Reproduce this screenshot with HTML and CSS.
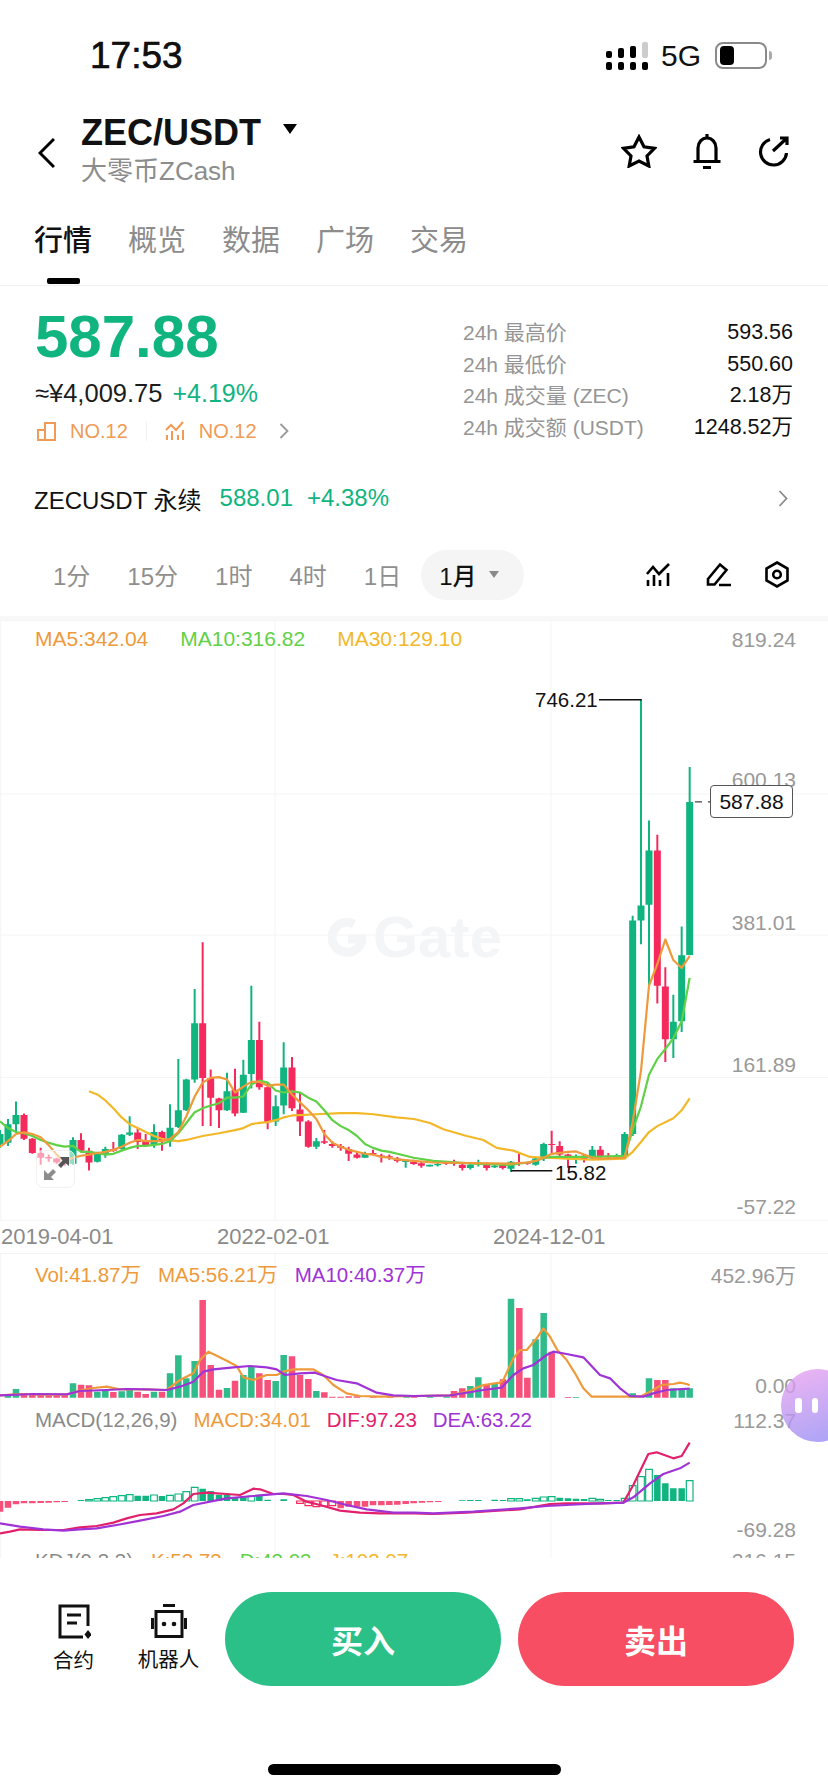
FILE: index.html
```html
<!DOCTYPE html>
<html lang="zh-CN">
<head>
    <meta charset="UTF-8">
    <meta name="viewport" content="width=device-width, initial-scale=1.0">
    <title>ZEC/USDT</title>
    <link rel="stylesheet" href="styles.css">
</head>
<body>
<div class="page">

    <div class="status">
        <span class="time">17:53</span>
        <svg class="signal" width="42" height="28" viewBox="0 0 42 28">
            <rect x="36" y="0" width="6" height="16" rx="2" fill="#ccc"/>
            <rect x="24" y="4" width="6" height="12" rx="2"/>
            <rect x="12" y="6" width="6" height="10" rx="2"/>
            <rect x="0" y="9" width="6" height="7" rx="2"/>
            <rect x="0" y="20" width="6" height="8" rx="2"/>
            <rect x="12" y="20" width="6" height="8" rx="2"/>
            <rect x="24" y="20" width="6" height="8" rx="2"/>
            <rect x="36" y="20" width="6" height="8" rx="2"/>
        </svg>
        <span class="network">5G</span>
        <div class="battery"><div class="battery-fill"></div></div>
        <div class="battery-nub"></div>
    </div>

    <div class="topbar">
        <svg class="back" width="17" height="30" viewBox="0 0 17 30"><polyline points="16,1 2,15 16,29"/></svg>
        <div class="pair">
            <div class="pair-name">ZEC/USDT <span class="caret"></span></div>
            <div class="pair-sub">大零币ZCash</div>
        </div>
        <div class="actions">
            <svg width="36" height="34" viewBox="0 0 36 34"><polygon points="18,3 23,12.8 33.5,14.3 26,22 27.8,32 18,27 8.2,32 10,22 2.5,14.3 13,12.8"/></svg>
            <svg width="30" height="36" viewBox="0 0 30 36"><path d="M6 28V15a9 10 0 0 1 18 0V28M1.500 28.500H28.500M15 1V4M11 34.500H19"/></svg>
            <svg width="32" height="31" viewBox="0 0 32 31"><path d="M13 3.500A13 13 0 1 0 29.500 17M16 15L30 2M23 2H30V9"/></svg>
        </div>
    </div>

    <div class="tabs">
        <div class="tab active">行情</div>
        <div class="tab">概览</div>
        <div class="tab">数据</div>
        <div class="tab">广场</div>
        <div class="tab">交易</div>
    </div>

    <div class="summary">
        <div class="quote">
            <div class="price">587.88</div>
            <div class="fiat">≈¥4,009.75<span class="change">+4.19%</span></div>
            <div class="rank">
                <svg width="19" height="20" viewBox="0 0 19 20"><path d="M1 9H8V19H1ZM8 2H18V19H8Z"/></svg>
                <span class="rank-text">NO.12</span>
                <span class="rank-sep"></span>
                <svg width="20" height="20" viewBox="0 0 20 20"><path d="M1 9L6 4L11 9L18 1M2 14V19M7 10V19M13 14V19M18 9V19"/></svg>
                <span class="rank-text">NO.12</span>
                <svg class="rank-more" width="10" height="16" viewBox="0 0 10 16"><polyline points="1.500,1 8.500,8 1.500,15"/></svg>
            </div>
        </div>
        <div class="stats">
            <div class="stat"><span>24h 最高价</span><b>593.56</b></div>
            <div class="stat"><span>24h 最低价</span><b>550.60</b></div>
            <div class="stat"><span>24h 成交量 (ZEC)</span><b>2.18万</b></div>
            <div class="stat"><span>24h 成交额 (USDT)</span><b>1248.52万</b></div>
        </div>
    </div>

    <div class="perp">
        <span class="perp-name">ZECUSDT 永续</span>
        <span class="perp-price">588.01</span>
        <span class="perp-change">+4.38%</span>
        <svg class="perp-more" width="10" height="17" viewBox="0 0 10 17"><polyline points="1.500,1 8.500,8.500 1.500,16"/></svg>
    </div>

    <div class="periods">
        <span class="period">1分</span>
        <span class="period">15分</span>
        <span class="period">1时</span>
        <span class="period">4时</span>
        <span class="period">1日</span>
        <span class="period active">1月<i class="period-caret"></i></span>
        <div class="tools">
            <svg width="25" height="24" viewBox="0 0 25 24"><path d="M1 11L7 4L13 11L23 1M2 17V23M8 12V23M14 17V23M22 10V23"/></svg>
            <svg width="26" height="25" viewBox="0 0 26 25"><path d="M3 17L15 2.500L21.500 8L9.500 22.500H3ZM14 23H26"/></svg>
            <svg width="24" height="27" viewBox="0 0 24 27"><path d="M12 1.500L22.500 7.500V19.500L12 25.500L1.500 19.500V7.500Z"/><circle cx="12" cy="13.500" r="3.800"/></svg>
        </div>
    </div>

    <div class="kline">
        <div class="watermark">
            <svg width="38" height="40" viewBox="0 0 38 40"><path d="M26 7A15 15 0 1 0 34 22H20"/></svg>
            <span>Gate</span>
        </div>
        <svg class="kline-chart" width="828" height="620" viewBox="0 0 2484 1568" preserveAspectRatio="none">
            <path class="grid" d="M0 1H2484M0 440H2484M0 797H2484M0 1157H2484M0 1518H2484M2 0V1518M825 0V1518M1653 0V1518"/>
            <!-- up candles -->
            <path class="wick up" d="M0 1290V1335M24 1262V1330M48 1218V1295M219 1308V1378M292 1345V1372M316 1332V1360M365 1300V1340M389 1255V1305M462 1275V1335M510 1225V1332M535 1110V1285M559 1160V1242M584 933V1170M681 1145V1242M730 1112V1247M754 925V1185M827 1202V1280M851 1068V1250M949 1310V1338M1095 1345V1360M1217 1365V1385M1289 1378V1382M1313 1372V1382M1411 1375V1390M1435 1365V1382M1484 1378V1386M1533 1368V1396M1607 1358V1380M1631 1322V1368M1728 1352V1375M1777 1330V1365M1850 1350V1365M1874 1295V1358M1898 748V1305M1923 200V820M1947 507V925M2020 948V1108M2045 775V1042M2069 372V848"/>
            <path class="body up" d="M0 1300V1325M24 1275V1322M48 1252V1275M219 1315V1375M292 1350V1370M316 1338V1352M365 1302V1338M389 1296V1302M462 1295V1328M510 1284V1318M535 1240V1282M559 1162V1240M584 1020V1162M681 1192V1240M730 1150V1246M754 1062V1148M827 1230V1268M851 1132V1228M949 1318V1332M1095 1350V1360M1217 1368V1371M1289 1378V1382M1313 1376V1379M1411 1378V1386M1435 1372V1376M1484 1380V1384M1533 1370V1388M1607 1362V1378M1631 1325V1362M1728 1356V1359M1777 1340V1362M1850 1355V1358M1874 1300V1355M1898 760V1300M1923 722V760M1947 583V720M2020 1016V1060M2045 848V1015M2069 460V847"/>
            <!-- down candles -->
            <path class="wick down" d="M72 1248V1315M97 1310V1350M122 1335V1378M146 1352V1370M170 1360V1375M194 1365V1380M243 1298V1345M267 1335V1392M340 1320V1345M413 1285V1338M437 1300V1332M486 1292V1342M608 815V1280M632 1137V1280M657 1208V1285M705 1135V1255M778 1016V1188M803 1170V1288M876 1105V1242M900 1195V1305M925 1265V1335M973 1290V1325M997 1318V1335M1022 1325V1342M1046 1332V1368M1071 1345V1362M1119 1340V1352M1144 1350V1372M1168 1352V1365M1192 1358V1372M1241 1365V1378M1264 1368V1385M1338 1368V1378M1362 1365V1380M1387 1375V1392M1460 1372V1392M1508 1375V1390M1557 1348V1380M1582 1370V1378M1655 1292V1352M1679 1318V1358M1704 1350V1385M1752 1352V1372M1801 1330V1362M1825 1348V1362M1972 543V970M1996 878V1118"/>
            <path class="body down" d="M72 1252V1312M97 1312V1348M122 1348V1360M146 1358V1362M170 1362V1372M194 1372V1376M243 1315V1342M267 1342V1372M340 1338V1342M413 1296V1320M437 1315V1328M486 1295V1318M608 1020V1158M632 1158V1208M657 1210V1240M705 1188V1248M778 1062V1182M803 1182V1270M876 1132V1235M900 1238V1268M925 1268V1332M973 1318V1322M997 1325V1330M1022 1330V1335M1046 1338V1350M1071 1352V1360M1119 1348V1351M1144 1354V1358M1168 1356V1359M1192 1362V1368M1241 1370V1376M1264 1374V1380M1338 1372V1375M1362 1372V1376M1387 1378V1386M1460 1375V1386M1508 1378V1386M1557 1372V1375M1582 1372V1375M1655 1325V1328M1679 1330V1352M1704 1352V1362M1752 1355V1365M1801 1340V1358M1825 1355V1358M1972 583V925M1996 927V1060"/>
            <path class="ma ma30" d="M267 1192L292 1200L316 1215L340 1235L365 1258L389 1275L413 1285L437 1295L462 1305L486 1312L510 1316L535 1318L559 1315L608 1305L657 1298L705 1290L730 1285L754 1275L778 1272L803 1270L827 1265L851 1258L876 1253L900 1252L949 1250L1022 1247L1071 1247L1120 1250L1190 1258L1242 1262L1290 1272L1330 1288L1400 1305L1450 1315L1490 1335L1540 1342L1590 1358L1640 1360L1700 1362L1777 1365L1874 1362L1898 1345L1923 1320L1947 1295L1972 1280L2020 1260L2045 1240L2069 1210"/>
            <path class="ma ma10" d="M0 1268L24 1285L48 1295L72 1298L97 1305L122 1315L146 1322L170 1328L194 1332L219 1330L243 1345L267 1345L292 1348L316 1352L340 1350L365 1342L389 1335L413 1330L437 1330L486 1325L510 1318L535 1298L559 1272L584 1245L608 1235L632 1228L657 1222L681 1208L705 1208L730 1205L754 1175L778 1165L803 1170L827 1190L851 1195L876 1192L900 1195L925 1208L949 1218L973 1240L997 1265L1022 1280L1046 1290L1071 1305L1095 1325L1119 1335L1144 1342L1168 1345L1192 1350L1241 1360L1300 1368L1420 1375L1530 1378L1582 1372L1607 1368L1631 1360L1655 1358L1704 1358L1777 1358L1874 1355L1898 1290L1923 1230L1947 1150L1972 1110L1996 1085L2020 1058L2045 1015L2069 905"/>
            <path class="ma ma5" d="M0 1332L24 1318L48 1300L72 1296L97 1300L122 1308L146 1328L170 1352L194 1370L219 1360L243 1355L267 1352L292 1348L316 1345L340 1340L365 1332L389 1322L413 1315L437 1318L486 1318L510 1312L535 1295L559 1255L584 1205L608 1170L632 1158L657 1156L681 1162L705 1195L730 1180L754 1168L778 1168L803 1178L827 1175L851 1175L876 1200L900 1220L925 1240L949 1262L973 1300L997 1322L1022 1332L1046 1340L1071 1345L1095 1350L1119 1352L1144 1358L1168 1360L1192 1364L1217 1366L1241 1368L1300 1372L1533 1375L1582 1372L1607 1368L1631 1360L1655 1350L1704 1345L1728 1344L1752 1352L1777 1360L1802 1362L1874 1360L1898 1270L1923 1140L1947 925L1972 870L1996 808L2020 860L2045 880L2069 850"/>
            <path class="marker" d="M1797 202H1925M1533 1393H1657"/>
            <path class="last-dash" d="M2085 460H2106M2124 460H2130"/>
        </svg>

        <div class="legend legend-main">
            <span class="c-ma5">MA5:342.04</span>
            <span class="c-ma10">MA10:316.82</span>
            <span class="c-ma30">MA30:129.10</span>
        </div>

        <span class="axis k1">819.24</span>
        <span class="axis k2">600.13</span>
        <span class="axis k3">381.01</span>
        <span class="axis k4">161.89</span>
        <span class="axis k5">-57.22</span>

        <span class="note note-high">746.21</span>
        <span class="note note-low">15.82</span>
        <span class="last-price">587.88</span>

        <span class="date d1">2019-04-01</span>
        <span class="date d2">2022-02-01</span>
        <span class="date d3">2024-12-01</span>

        <div class="expand">
            <svg width="28" height="28" viewBox="0 0 28 28">
                <path class="expand-out" d="M2 25V15L6 19L11 14L14 17L9 22L12 25Z"/>
                <path class="expand-in" d="M27 2V11L23.500 8L19 13L16 10L20.500 5.500L18 2Z"/>
            </svg>
        </div>
    </div>

    <div class="indicators">
        <svg class="ind-chart" width="828" height="304" viewBox="0 42 2484 912">
            <path class="grid" d="M2 42V954M825 42V954M1653 42V954"/>
            <!-- volume -->
            <path class="vol up" d="M24 473V465M48 473V447M219 473V430M292 473V455M316 473V452M365 473V454M389 473V445M462 473V455M510 473V400M535 473V346M559 473V415M584 473V363M681 473V444M730 473V405M754 473V380M827 473V423M851 473V345M949 473V453M1220 473V468M1290 473V469M1340 473V469M1411 473V438M1435 473V412M1484 473V430M1533 473V176M1607 473V298M1631 473V219M1728 473V471M1898 473V460M1947 473V415M2020 473V445M2045 473V445M2069 473V445"/>
            <path class="vol down" d="M72 473V460M97 473V462M122 473V465M146 473V466M170 473V466M194 473V466M243 473V434M267 473V436M340 473V456M413 473V455M437 473V462M486 473V455M608 473V180M632 473V375M657 473V449M705 473V422M778 473V400M803 473V420M876 473V349M900 473V405M925 473V417M973 473V457M997 473V470M1022 473V470M1046 473V469M1071 473V469M1120 473V470M1170 473V469M1242 473V468M1362 473V453M1387 473V445M1460 473V432M1509 473V418M1558 473V204M1582 473V413M1655 473V335M1704 473V471M1972 473V420M1996 473V420"/>
            <path class="ma ind-orange" d="M0 466L60 462L120 464L200 464L240 452L280 444L320 440L360 448L420 448L500 450L540 420L580 400L600 360L625 335L650 347L680 362L710 378L730 412L760 420L800 405L830 405L850 395L880 388L940 388L970 405L1000 435L1040 460L1080 468L1140 470L1242 468L1350 466L1400 455L1450 435L1500 428L1510 420L1540 355L1560 330L1580 330L1610 295L1630 265L1650 290L1672 330L1700 360L1725 400L1750 445L1775 470L1920 470L1950 455L1985 435L2020 432L2040 428L2060 432L2069 436"/>
            <path class="ma ind-purple" d="M0 466L100 462L200 463L240 453L320 450L380 447L440 448L500 450L540 440L580 425L610 395L640 388L700 382L750 378L800 382L830 388L855 405L900 400L945 398L980 410L1010 420L1070 430L1130 458L1180 466L1242 468L1350 466L1450 450L1505 443L1540 405L1570 385L1600 375L1640 345L1660 335L1700 342L1750 352L1800 405L1830 415L1860 445L1890 468L1930 470L1960 460L2000 450L2069 446"/>
            <!-- macd -->
            <path class="vol down" d="M0 783V815M24 783V803M48 783V793M72 783V790M97 783V790M122 783V789M146 783V788M170 783V787M194 783V786M1022 783V805M1046 783V800M1071 783V800M1095 783V800M1119 783V796M1144 783V796M1168 783V795M1192 783V794M1217 783V792M1241 783V790M1266 783V788M1290 783V787M1315 783V786"/>
            <path class="vol macd-up" d="M243 783V780M413 783V767M437 783V767M486 783V768M608 783V746M632 783V753M657 783V764M681 783V764M705 783V772M730 783V772M778 783V767M803 783V779M851 783V778M1387 783V781M1411 783V780M1435 783V780M1484 783V779M1509 783V780M1582 783V778M1679 783V773M1704 783V775M1728 783V776M1752 783V777M1825 783V780M1850 783V780M1972 783V705M1996 783V730M2020 783V745M2045 783V745"/>
            <path class="hollow up-line" d="M257 779h20V783h-20ZM282 776h20V783h-20ZM306 773h20V783h-20ZM330 770h20V783h-20ZM355 767h20V783h-20ZM379 764h20V783h-20ZM452 765h20V783h-20ZM500 766h20V783h-20ZM525 762h20V783h-20ZM549 755h20V783h-20ZM574 742h20V783h-20ZM744 768h20V783h-20ZM1523 776h20V783h-20ZM1548 776h20V783h-20ZM1597 775h20V783h-20ZM1621 771h20V783h-20ZM1645 770h20V783h-20ZM1767 775h20V783h-20ZM1791 778h20V783h-20ZM1864 775h20V783h-20ZM1888 737h20V783h-20ZM1913 710h20V783h-20ZM1937 688h20V783h-20ZM2059 722h20V783h-20Z"/>
            <path class="hollow down-line" d="M890 783h20v7h-20ZM915 783h20v14h-20ZM939 783h20v17h-20ZM963 783h20v15h-20ZM987 783h20v14h-20Z"/>
            <path class="ma ind-pink" d="M0 880L30 875L60 868L120 870L190 870L240 862L290 858L340 848L380 835L420 825L470 820L520 808L550 790L580 762L620 758L680 762L720 765L760 746L780 748L820 762L850 762L880 765L920 785L960 795L1020 812L1080 818L1140 820L1242 820L1300 822L1400 818L1560 808L1650 792L1700 790L1800 790L1870 788L1900 735L1945 642L1970 637L2020 655L2045 648L2069 608"/>
            <path class="ma ind-purple" d="M0 850L60 860L130 868L190 872L240 868L290 865L350 855L420 842L490 828L540 815L580 795L630 785L680 775L760 768L850 760L920 768L980 780L1040 795L1100 808L1180 818L1242 818L1300 820L1420 815L1560 805L1640 798L1760 792L1870 788L1900 772L1950 730L1990 702L2040 685L2069 668"/>
        </svg>

        <div class="legend legend-vol">
            <span class="c-ma5">Vol:41.87万</span>
            <span class="c-ma5">MA5:56.21万</span>
            <span class="c-purple">MA10:40.37万</span>
        </div>
        <div class="legend legend-macd">
            <span class="c-grey">MACD(12,26,9)</span>
            <span class="c-ma5">MACD:34.01</span>
            <span class="c-pink">DIF:97.23</span>
            <span class="c-purple">DEA:63.22</span>
        </div>
        <div class="legend legend-kdj">
            <span class="c-grey">KDJ(9,3,3)</span>
            <span class="c-ma5">K:53.73</span>
            <span class="c-ma10">D:43.03</span>
            <span class="c-ma30">J:103.07</span>
        </div>

        <span class="axis v1">452.96万</span>
        <span class="axis v2">0.00</span>
        <span class="axis v3">112.37</span>
        <span class="axis v4">-69.28</span>
        <span class="axis v5">216.15</span>
    </div>

    <div class="bottom">
        <div class="actions-row">
            <div class="shortcut shortcut-order">
                <svg width="34" height="35" viewBox="0 0 34 35">
                    <path class="shortcut-line" d="M31 22V2H3V33H26M10 11H24M10 19H20"/>
                    <path class="shortcut-fill" d="M31 26L34.500 30.500L31 35L27.500 30.500Z"/>
                </svg>
                <span>合约</span>
            </div>
            <div class="shortcut shortcut-bot">
                <svg width="36" height="34" viewBox="0 0 36 34">
                    <path class="shortcut-line" d="M12 1.500H24M5 7.500H31V32.500H5ZM1.500 14V25M34.500 14V25"/>
                    <circle class="shortcut-fill" cx="13" cy="20" r="2.300"/>
                    <circle class="shortcut-fill" cx="23" cy="20" r="2.300"/>
                </svg>
                <span>机器人</span>
            </div>
            <div class="trade buy">买入</div>
            <div class="trade sell">卖出</div>
        </div>
        <div class="home-bar"></div>
    </div>

    <div class="assistant"><span></span><span></span></div>
</div>
</body>
</html>
```

FILE: styles.css
```css
:root {
    --up: #10b47f;
    --down: #f52a5c;
    --text: #111;
    --muted: #959595;
    --ma5: #ee9a3a;
    --ma10: #5fd147;
    --ma30: #f2b82a;
    --purple: #a033d6;
    --pink: #e3206b;
    --rank: #f09a55;
}
* {
    box-sizing: border-box;
    margin: 0;
    padding: 0;
}
body {
    font-family: "Liberation Sans", "Noto Sans CJK SC", sans-serif;
    color: var(--text);
    background: #fff;
}
.page {
    position: relative;
    width: 828px;
    height: 1792px;
    overflow: hidden;
}

/* status bar */
.status {
    display: flex;
    align-items: center;
    height: 111px;
    padding-left: 90px;
}
.time {
    font-size: 37px;
    font-weight: 500;
    width: 516px;
    -webkit-text-stroke: 0.6px #000;
}
.network {
    font-size: 30px;
    margin-left: 13px;
    margin-right: 14px;
}
.battery {
    width: 52px;
    height: 27px;
    border: 2px solid #8a8a8a;
    border-radius: 8px;
    padding: 2px 3px;
}
.battery-fill {
    width: 14px;
    height: 100%;
    background: #000;
    border-radius: 4px;
}
.battery-nub {
    width: 3px;
    height: 9px;
    margin-left: 2px;
    background: #aaa;
    border-radius: 0 3px 3px 0;
}

/* header */
.topbar {
    display: flex;
    align-items: center;
    height: 84px;
    padding-left: 38px;
    padding-right: 39px;
}
.back {
    margin-right: 26px;
}
.back polyline {
    fill: none;
    stroke: #000;
    stroke-width: 3;
}
.pair {
    margin-top: -8px;
}
.pair-name {
    font-size: 36px;
    font-weight: bold;
    line-height: 40px;
    display: flex;
    align-items: center;
    gap: 22px;
}
.caret {
    width: 0;
    height: 0;
    border-left: 7.500px solid transparent;
    border-right: 7.500px solid transparent;
    border-top: 10px solid #000;
    margin-bottom: 8px;
}
.pair-sub {
    font-size: 26px;
    line-height: 30px;
    margin-top: 3px;
    color: #8c8c8c;
}
.actions {
    margin-left: auto;
    display: flex;
    align-items: center;
    gap: 35px;
    margin-top: -4px;
}
.actions svg {
    fill: none;
    stroke: #000;
    stroke-width: 3.200;
    stroke-linejoin: miter;
}

/* tabs */
.tabs {
    display: flex;
    gap: 36px;
    height: 91px;
    padding-left: 34px;
    border-bottom: 1px solid #f1f1f1;
}
.tab {
    position: relative;
    width: 58px;
    font-size: 29px;
    line-height: 92px;
    color: #8c8c8c;
}
.tab.active {
    color: #111;
    font-weight: 500;
}
.tab.active::after {
    content: "";
    position: absolute;
    left: 13px;
    bottom: 1px;
    width: 33px;
    height: 6px;
    background: #000;
    border-radius: 2px;
}

/* price block */
.summary {
    display: flex;
    justify-content: space-between;
    height: 184px;
    padding: 0 35px;
}
.price {
    font-size: 60px;
    font-weight: bold;
    line-height: 60px;
    color: var(--up);
    margin-top: 21px;
}
.fiat {
    font-size: 25.500px;
    line-height: 30px;
    margin-top: 11px;
    color: #1c1c1c;
}
.change {
    color: var(--up);
    font-size: 25px;
    margin-left: 10px;
}
.rank {
    display: flex;
    align-items: center;
    height: 24px;
    margin-top: 11px;
    padding-left: 2px;
}
.rank svg {
    fill: none;
    stroke: var(--rank);
    stroke-width: 2;
}
.rank-text {
    font-size: 20px;
    color: var(--rank);
    margin-left: 14px;
}
.rank-sep {
    width: 1px;
    height: 20px;
    margin: 0 18px;
    background: #f2f2f2;
}
.rank .rank-more {
    margin-left: 22px;
    stroke: #999;
    stroke-width: 1.800;
}
.stats {
    width: 330px;
    padding-top: 31px;
}
.stat {
    display: flex;
    justify-content: space-between;
    height: 31.500px;
    line-height: 31.500px;
    font-size: 21px;
    color: var(--muted);
}
.stat b {
    font-weight: normal;
    color: #111;
    font-size: 21.500px;
}

/* perpetual row */
.perp {
    display: flex;
    align-items: center;
    height: 58px;
    padding: 0 40px 2px 34px;
    font-size: 24px;
    color: var(--up);
}
.perp-name {
    color: #111;
}
.perp-price {
    margin-left: 18px;
}
.perp-change {
    margin-left: 14px;
}
.perp-more {
    margin-left: auto;
    fill: none;
    stroke: #8a8a8a;
    stroke-width: 1.800;
}

/* period selector */
.periods {
    display: flex;
    align-items: center;
    gap: 37px;
    height: 92px;
    padding: 5px 39px 0 53px;
    font-size: 24px;
    color: #8f8f8f;
    border-bottom: 4px solid #f8f8f8;
}
.period.active {
    display: flex;
    align-items: center;
    gap: 12px;
    height: 50px;
    margin-left: -17px;
    padding: 0 25px 0 18px;
    border-radius: 25px;
    background: #f5f5f5;
    color: #111;
    font-weight: 500;
}
.period-caret {
    width: 0;
    height: 0;
    border-left: 5px solid transparent;
    border-right: 5px solid transparent;
    border-top: 7px solid #8a8a8a;
}
.tools {
    margin-left: auto;
    display: flex;
    align-items: center;
    gap: 34px;
}
.tools svg {
    fill: none;
    stroke: #000;
    stroke-width: 2.600;
}

/* charts */
.kline {
    position: relative;
    height: 634px;
    border-bottom: 1px solid #f4f4f4;
}
.kline-chart,
.ind-chart {
    position: absolute;
    left: 0;
    top: 0;
}
.kline-chart path,
.ind-chart path {
    vector-effect: non-scaling-stroke;
    fill: none;
}
.grid {
    stroke: #f5f5f5;
    stroke-width: 1;
}
.wick {
    stroke-width: 2;
}
.body {
    stroke-width: 7;
}
.up {
    stroke: var(--up);
}
.down {
    stroke: var(--down);
}
.ma {
    stroke-width: 2.200;
    stroke-linejoin: round;
}
.ma5 {
    stroke: var(--ma5);
}
.ma10 {
    stroke: var(--ma10);
}
.ma30 {
    stroke: var(--ma30);
}
.marker {
    stroke: #111;
    stroke-width: 1.500;
}
.last-dash {
    stroke: #444;
    stroke-width: 1.400;
}
.watermark {
    position: absolute;
    left: 328px;
    top: 297px;
    display: flex;
    align-items: center;
    gap: 7px;
    font-size: 58px;
    font-weight: bold;
    line-height: 40px;
    color: #f4f5f7;
}
.watermark svg {
    fill: none;
    stroke: #f4f5f7;
    stroke-width: 9;
}
.legend {
    display: flex;
    position: relative;
    padding-left: 35px;
    font-size: 20.500px;
    white-space: nowrap;
}
.legend-main {
    gap: 32px;
    height: 37px;
    line-height: 37px;
    font-size: 21px;
}
.legend-vol {
    gap: 17px;
    height: 42px;
    line-height: 42px;
}
.legend-macd {
    gap: 16px;
    height: 24px;
    line-height: 24px;
    margin-top: 112px;
}
.legend-kdj {
    gap: 18px;
    height: 24px;
    line-height: 24px;
    margin-top: 117px;
}
.c-ma5 {
    color: var(--ma5);
}
.c-ma10 {
    color: var(--ma10);
}
.c-ma30 {
    color: var(--ma30);
}
.c-purple {
    color: var(--purple);
}
.c-pink {
    color: var(--pink);
}
.c-grey {
    color: #8a8a8a;
}
.axis {
    position: absolute;
    right: 32px;
    font-size: 21px;
    line-height: 24px;
    color: #999;
}
.k1 { top: 8px; }
.k2 { top: 148px; }
.k3 { top: 291px; }
.k4 { top: 433px; }
.k5 { top: 575px; }
.v1 { top: 10px; }
.v2 { top: 120px; }
.v3 { top: 155px; }
.v4 { top: 264px; }
.v5 { top: 295px; }
.note {
    position: absolute;
    font-size: 20.500px;
    line-height: 24px;
    color: #111;
}
.note-high {
    left: 535px;
    top: 68px;
}
.note-low {
    left: 555px;
    top: 541px;
}
.last-price {
    position: absolute;
    left: 710px;
    top: 165px;
    width: 83px;
    height: 33px;
    border: 1px solid #555;
    border-radius: 4px;
    background: #fff;
    font-size: 21px;
    line-height: 31px;
    text-align: center;
    color: #111;
}
.date {
    position: absolute;
    top: 605px;
    font-size: 22px;
    line-height: 24px;
    color: #8a8a8a;
}
.d1 { left: 1px; }
.d2 { left: 217px; }
.d3 { left: 493px; }
.expand {
    position: absolute;
    left: 36px;
    top: 530px;
    width: 39px;
    height: 38px;
    display: flex;
    align-items: center;
    justify-content: center;
    background: rgba(255, 255, 255, 0.55);
    border: 1px solid #f1f1f1;
    border-radius: 7px;
}
.expand path {
    stroke: none;
}
.expand-out {
    fill: #8d8d8d;
}
.expand-in {
    fill: #55555a;
}
.indicators {
    position: relative;
    height: 304px;
    overflow: hidden;
}
.vol {
    stroke-width: 6.500;
}
.vol.up {
    stroke: #2fbb8a;
}
.vol.down {
    stroke: #f7507a;
}
.vol.macd-up {
    stroke: var(--up);
}
.ind-orange {
    stroke: var(--ma5);
    stroke-width: 2.200;
}
.ind-purple {
    stroke: var(--purple);
    stroke-width: 2.200;
}
.ind-pink {
    stroke: var(--pink);
    stroke-width: 2.200;
}
.ind-chart path.hollow {
    fill: #fff;
    stroke-width: 1.200;
}
.up-line {
    stroke: var(--up);
}
.down-line {
    stroke: var(--down);
}

/* footer */
.bottom {
    position: relative;
    height: 234px;
    background: #fff;
}
.actions-row {
    display: flex;
    align-items: flex-start;
    padding-top: 34px;
}
.shortcut {
    display: flex;
    flex-direction: column;
    align-items: center;
    gap: 10px;
    padding-top: 12px;
    font-size: 20.500px;
    line-height: 24px;
    color: #111;
}
.shortcut-order {
    width: 41px;
    margin-left: 53px;
    margin-right: 43px;
}
.shortcut-bot {
    width: 63px;
    margin-right: 25px;
}
.shortcut-line {
    fill: none;
    stroke: #111;
    stroke-width: 3;
}
.shortcut-fill {
    fill: #111;
}
.trade {
    display: flex;
    align-items: center;
    justify-content: center;
    width: 276px;
    height: 94px;
    border-radius: 47px;
    color: #fff;
    font-size: 32px;
    font-weight: bold;
}
.buy {
    background: #2bc088;
}
.sell {
    background: #f74e63;
    margin-left: 17px;
}
.home-bar {
    position: absolute;
    left: 268px;
    top: 206px;
    width: 293px;
    height: 11px;
    background: #000;
    border-radius: 6px;
}

/* floating assistant */
.assistant {
    position: absolute;
    left: 781px;
    top: 1369px;
    width: 73px;
    height: 73px;
    display: flex;
    gap: 10px;
    align-items: center;
    padding-left: 14px;
    border-radius: 50%;
    background: linear-gradient(160deg, rgba(236, 160, 238, 0.78), rgba(140, 136, 244, 0.78));
}
.assistant span {
    width: 6.500px;
    height: 15px;
    background: #fff;
    border-radius: 3px;
}
```
